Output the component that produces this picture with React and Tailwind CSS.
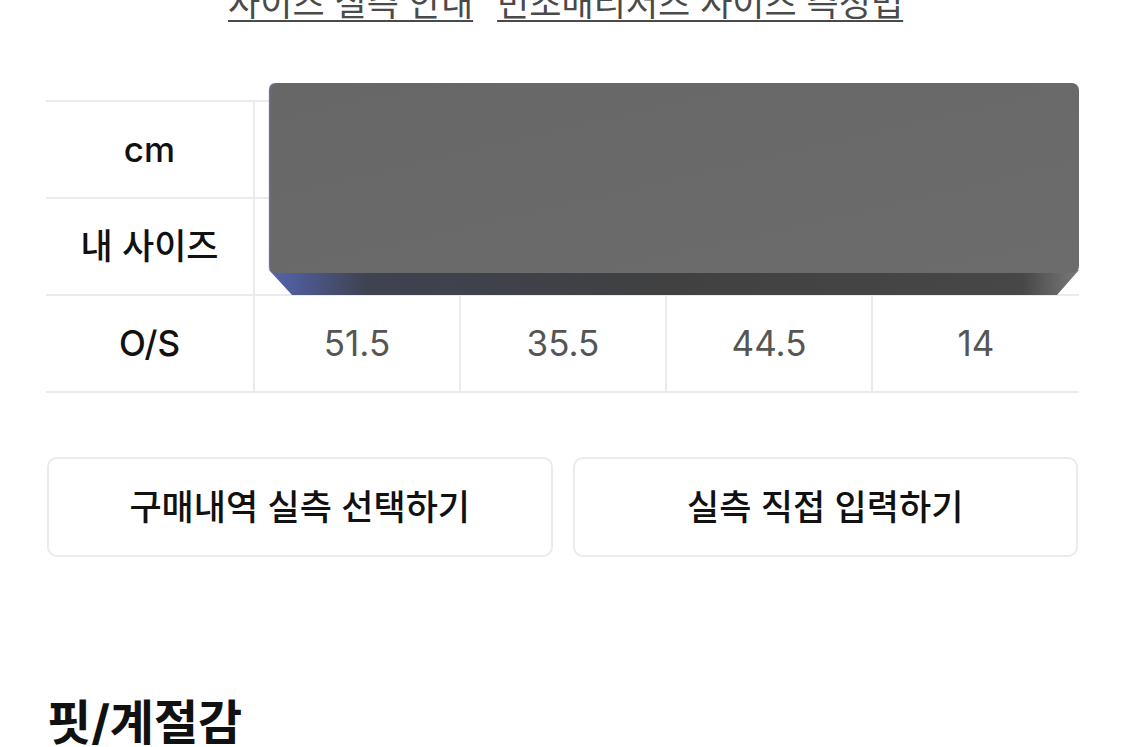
import React from 'react';

const font = { fontFamily: '"Inter", "Noto Sans CJK KR", sans-serif' };

const rows = [
  { label: 'cm', values: ['', '', '', ''] },
  { label: '내 사이즈', values: ['', '', '', ''] },
  { label: 'O/S', values: ['51.5', '35.5', '44.5', '14'] },
];

const Block = () => (
  <svg className="absolute left-[222px] -top-[18px]" width="812" height="214" viewBox="0 0 812 214">
    <defs>
      <linearGradient id="bevel" x1="0" x2="1" y1="0" y2="0">
        <stop offset="0" stopColor="#5465b0" />
        <stop offset="0.12" stopColor="#3f4250" />
        <stop offset="0.5" stopColor="#414141" />
        <stop offset="0.93" stopColor="#474747" />
        <stop offset="1" stopColor="#7a7a7a" />
      </linearGradient>
      <linearGradient id="face" x1="0" x2="1" y1="0" y2="1">
        <stop offset="0" stopColor="#676767" />
        <stop offset="1" stopColor="#6c6c6c" />
      </linearGradient>
    </defs>
    <path d="M1 188 L811 188 L789 213 L24 213 Z" fill="url(#bevel)" />
    <rect x="1" y="1" width="810" height="190" rx="7" fill="url(#face)" />
    <path d="M1.5 188 L1.5 8 Q1.5 1.5 8 1.5" fill="none" stroke="#717ab5" strokeWidth="1.5" opacity="0.6" />
  </svg>
);

export default function App() {
  return (
    <div className="w-[1125px] h-[747px] overflow-hidden bg-white" style={font}>
      <div className="flex gap-[24px] pl-[228px] -mt-[17px] h-[44px] text-[35px] leading-[40px] text-[#4a4a4a]">
        <span className="underline decoration-[2px] underline-offset-[4px]">사이즈 실측 안내</span>
        <span className="underline decoration-[2px] underline-offset-[4px]">빈조매리저즈 사이즈 측정법</span>
      </div>

      <div className="relative mx-[46px] mt-[73px]">
        <div className="grid grid-cols-[209px_1fr_1fr_1fr_1fr] border-t-2 border-[#ebebeb]">
          {rows.map((r) => (
            <React.Fragment key={r.label}>
              <div className="h-[97px] flex items-center justify-center border-b-2 border-r-2 border-[#ebebeb] text-[35px] font-medium text-[#111]">
                {r.label}
              </div>
              {r.values.map((v, i) => (
                <div
                  key={i}
                  className={`h-[97px] flex items-center justify-center border-b-2 border-[#ebebeb] text-[35px] text-[#555] ${i < 3 ? 'border-r-2' : ''}`}
                >
                  {v}
                </div>
              ))}
            </React.Fragment>
          ))}
        </div>
        <Block />
      </div>

      <div className="mx-[47px] mt-[64px] grid grid-cols-2 gap-[20px]">
        <button className="h-[100px] rounded-[10px] border-2 border-[#ebebeb] bg-white text-[35px] font-medium text-[#111]">
          구매내역 실측 선택하기
        </button>
        <button className="h-[100px] rounded-[10px] border-2 border-[#ebebeb] bg-white text-[35px] font-medium text-[#111]">
          실측 직접 입력하기
        </button>
      </div>

      <h2 className="mx-[47px] mt-[138px] text-[48px] font-bold leading-[56px] text-[#111]">핏/계절감</h2>
    </div>
  );
}
